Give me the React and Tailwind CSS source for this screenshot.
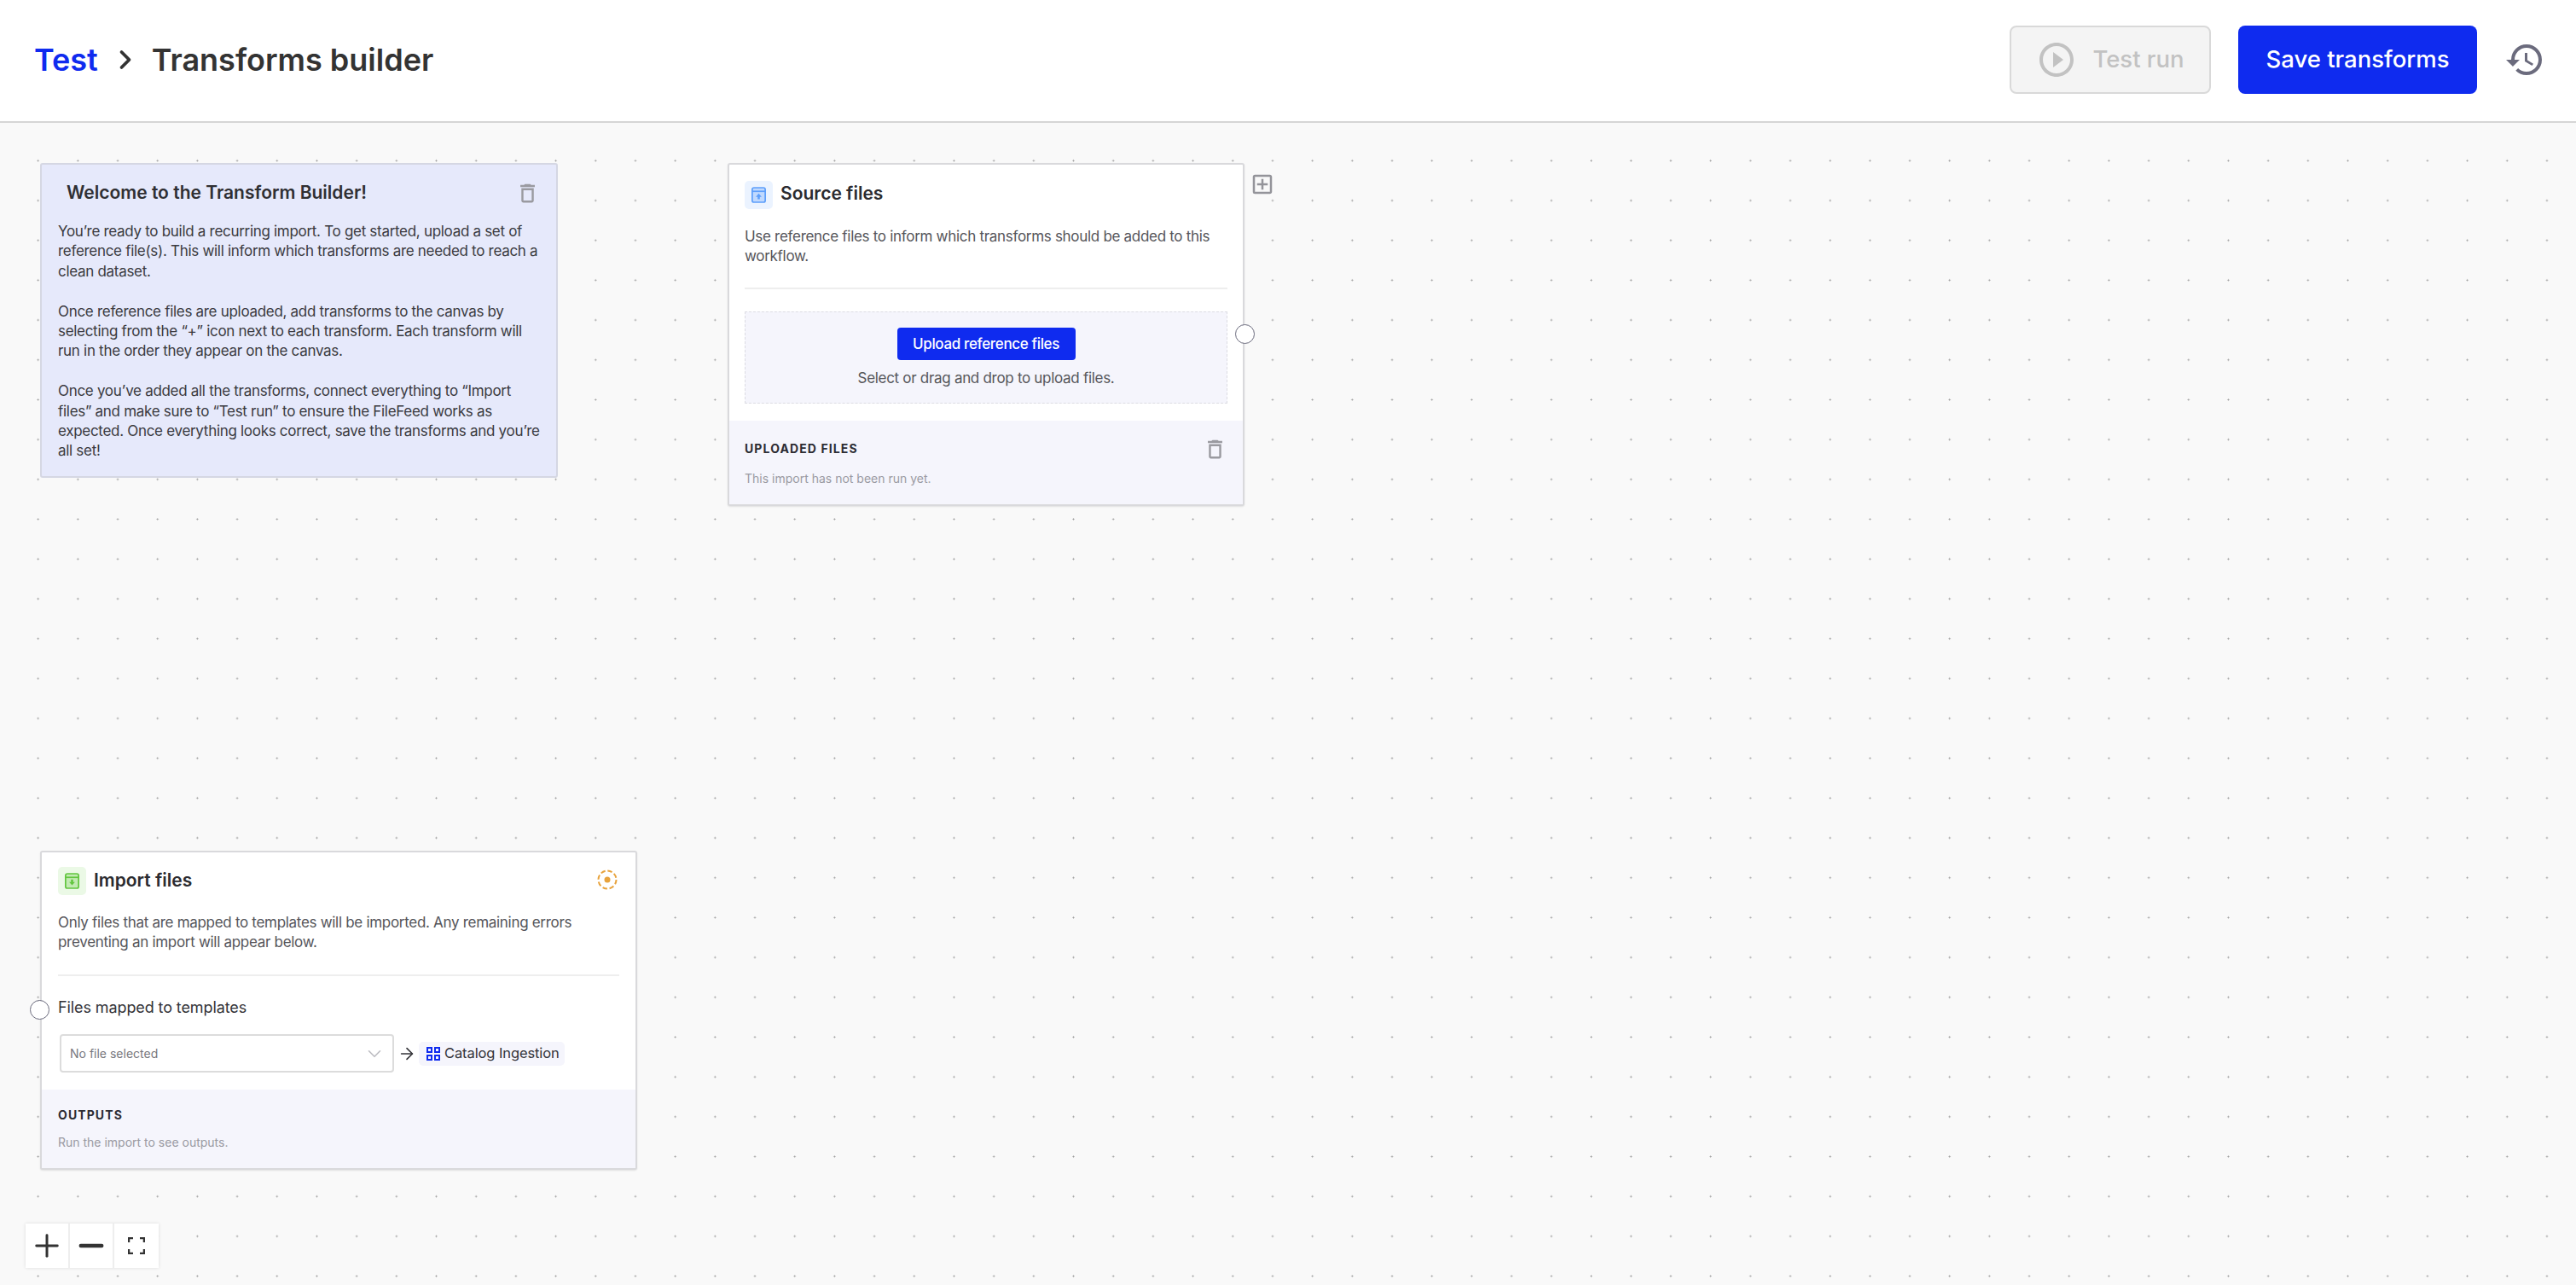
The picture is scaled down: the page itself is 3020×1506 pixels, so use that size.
import React from "react";
import { ChevronRight, ChevronDown, ArrowRight, Plus, Minus } from "lucide-react";
import { MdHistory, MdOutlineDelete, MdOutlineAddBox, MdPlayCircleOutline } from "react-icons/md";

const font = { fontFamily: "Inter, sans-serif" };

const ArchiveIcon = ({ className, down }) => (
  <svg viewBox="0 0 20 22" className={className} fill="none">
    <rect x="1" y="1" width="18" height="20" rx="2.5" fill="currentColor" fillOpacity="0.3" stroke="currentColor" strokeWidth="2" />
    <path d="M1 6h18" stroke="currentColor" strokeWidth="2" />
    {down ? (
      <path d="M8.5 9h3v3.500H14L10 17l-4-4.500h2.500z" fill="currentColor" />
    ) : (
      <path d="M10 9l4 4.500h-2.500V17h-3v-3.500H6z" fill="currentColor" />
    )}
  </svg>
);

export default function App() {
  return (
    <div className="flex flex-col h-[1506px] w-full overflow-hidden text-[#333333]" style={font}>
      <header className="flex items-center justify-between h-[144px] shrink-0 bg-white border-b-2 border-[#d6d6d6] pl-[40px] pr-[36px] pb-[2px]">
        <div className="flex items-center text-[36px] font-semibold leading-[44px]">
          <span className="text-[#0f2bef]">Test</span>
          <ChevronRight className="w-[36px] h-[36px] ml-[14px] mr-[13px] text-[#333333]" strokeWidth={2.5} />
          <span>Transforms builder</span>
        </div>
        <div className="flex items-center">
          <button className="flex items-center justify-center w-[236px] h-[80px] rounded-[8px] border-2 border-[#d9d9d9] bg-[#f4f4f4] text-[27.5px] font-medium text-[#c2c2c2]">
            <MdPlayCircleOutline className="w-[48px] h-[48px] mr-[18px]" />
            Test run
          </button>
          <button className="ml-[32px] w-[280px] h-[80px] rounded-[8px] bg-[#0f2bef] text-white text-[27.5px] font-medium">
            Save transforms
          </button>
          <MdHistory className="ml-[32px] w-[48px] h-[48px] text-[#6b6b7d]" />
        </div>
      </header>

      <main className="relative flex-1 bg-[#f9f9f9] bg-[radial-gradient(circle,#9a9a9a_0.9px,transparent_1.1px)] bg-[size:46.7px_46.7px] bg-[position:21.3px_21px]">
        {/* welcome note */}
        <div className="absolute left-[47px] top-[47px] w-[607px] h-[369px] rounded-[3px] border-2 border-[#d5d7e3] bg-[#e6e9fb] pl-[19px] pr-[19px]">
          <div className="flex items-center justify-between h-[66px] pl-[10px]">
            <div className="text-[21px] font-semibold text-[#2f2f33]">Welcome to the Transform Builder!</div>
            <MdOutlineDelete className="w-[29px] h-[29px] text-[#9a9aa0]" />
          </div>
          <div className="text-[17px] tracking-[-0.3px] leading-[23.4px] text-[#3a3a40] mt-[1px] w-[567px]">
            <p>You’re ready to build a recurring import. To get started, upload a set of reference file(s). This will inform which transforms are needed to reach a clean dataset.</p>
            <p className="mt-[23.4px]">Once reference files are uploaded, add transforms to the canvas by selecting from the “+” icon next to each transform. Each transform will run in the order they appear on the canvas.</p>
            <p className="mt-[23.4px]">Once you’ve added all the transforms, connect everything to “Import files” and make sure to “Test run” to ensure the FileFeed works as expected. Once everything looks correct, save the transforms and you’re all set!</p>
          </div>
        </div>

        {/* source files node */}
        <div className="absolute left-[853px] top-[47px] w-[606px] rounded-[3px] border-2 border-[#d9d9dc] bg-white shadow-[0_1px_2px_rgba(0,0,0,0.1)]">
          <div className="flex items-center gap-[9px] px-[18px] pt-[18px]">
            <div className="flex items-center justify-center w-[33px] h-[33px] rounded-[5px] bg-[#ebf3ff] text-[#5d9ffb]">
              <ArchiveIcon className="w-[17px] h-[19px]" />
            </div>
            <div className="text-[21px] font-semibold text-[#2b2b2f] mb-[3px]">Source files</div>
          </div>
          <div className="mx-[18px] mt-[20px] pb-[25px] border-b-2 border-[#eeeeee] text-[17px] tracking-[-0.3px] leading-[23.4px] text-[#55555a]">
            Use reference files to inform which transforms should be added to this workflow.
          </div>
          <div className="mx-[18px] mt-[26px] h-[108px] flex flex-col items-center border border-dashed border-[#dcdce3] bg-[#f5f5fc] pt-[18px]">
            <button className="w-[209px] h-[38px] rounded-[4px] bg-[#0f2bef] text-white text-[17px] tracking-[-0.35px] font-medium">
              Upload reference files
            </button>
            <div className="mt-[9px] text-[17px] tracking-[-0.3px] leading-[24px] text-[#55555a]">Select or drag and drop to upload files.</div>
          </div>
          <div className="mt-[20px] bg-[#f5f5fc] px-[18px] pt-[22px] pb-[19px]">
            <div className="flex items-center justify-between h-[22px]">
              <div className="text-[14px] font-bold tracking-[1.1px] text-[#2c2c33] leading-[22px]">UPLOADED FILES</div>
              <MdOutlineDelete className="w-[29px] h-[29px] text-[#9a9aa0]" />
            </div>
            <div className="mt-[13px] text-[14px] leading-[22px] text-[#9a9aa2]">This import has not been run yet.</div>
          </div>
          <div className="absolute right-[-14px] top-[187px] w-[23px] h-[23px] rounded-full border border-[#6b6b7d] bg-white" />
        </div>
        <MdOutlineAddBox className="absolute left-[1465px] top-[57px] w-[30px] h-[30px] text-[#94949a]" />

        {/* import files node */}
        <div className="absolute left-[47px] top-[853px] w-[700px] rounded-[3px] border-2 border-[#d9d9dc] bg-white shadow-[0_1px_2px_rgba(0,0,0,0.1)]">
          <div className="flex items-center gap-[9px] px-[19px] pt-[17px]">
            <div className="flex items-center justify-center w-[33px] h-[33px] rounded-[5px] bg-[#ebf9e6] text-[#62c63f]">
              <ArchiveIcon className="w-[17px] h-[19px]" down />
            </div>
            <div className="text-[21px] font-semibold text-[#2b2b2f] mb-[2px]">Import files</div>
            <svg viewBox="0 0 24 24" className="ml-auto mr-[2px] mb-[3px] w-[24px] h-[24px] text-[#e8a33d]" fill="none">
              <circle cx="12" cy="12" r="10.500" stroke="currentColor" strokeWidth="2" strokeDasharray="5.500 2.750" />
              <circle cx="12" cy="12" r="3.500" fill="currentColor" />
            </svg>
          </div>
          <div className="mx-[19px] mt-[20px] pb-[26px] border-b-2 border-[#eeeeee] text-[17px] tracking-[-0.3px] leading-[23.4px] text-[#55555a]">
            Only files that are mapped to templates will be imported. Any remaining errors preventing an import will appear below.
          </div>
          <div className="mx-[19px] mt-[25px] text-[18px] tracking-[-0.1px] leading-[24px] text-[#333338]">Files mapped to templates</div>
          <div className="flex items-center ml-[21px] mt-[19px]">
            <div className="flex items-center justify-between w-[392px] h-[45px] rounded-[4px] border-2 border-[#dcdcdc] bg-white pl-[10px] pr-[8px] text-[14px] text-[#77777d]">
              No file selected
              <ChevronDown className="w-[26px] h-[26px] text-[#bdbdc2]" strokeWidth={1.5} />
            </div>
            <ArrowRight className="ml-[4px] w-[22px] h-[22px] text-[#333338]" strokeWidth={1.75} />
            <div className="flex items-center ml-[3px] h-[28px] w-[171px] rounded-[5px] bg-[#f5f5fc] pl-[9px] text-[16.5px] tracking-[-0.1px] text-[#333338] whitespace-nowrap">
              <svg viewBox="0 0 16 16" className="w-[16px] h-[16px] mr-[5px] text-[#0f2bef]" fill="none" stroke="currentColor" strokeWidth="2">
                <rect x="1" y="1" width="5" height="5" />
                <rect x="10" y="1" width="5" height="5" />
                <rect x="1" y="10" width="5" height="5" />
                <rect x="10" y="10" width="5" height="5" />
              </svg>
              Catalog Ingestion
            </div>
          </div>
          <div className="mt-[20px] bg-[#f5f5fc] px-[19px] pt-[19px] pb-[19px]">
            <div className="text-[14px] font-bold tracking-[1.1px] text-[#2c2c33] leading-[22px]">OUTPUTS</div>
            <div className="mt-[10px] text-[14px] leading-[22px] text-[#9a9aa2]">Run the import to see outputs.</div>
          </div>
          <div className="absolute left-[-14px] top-[173px] w-[23px] h-[23px] rounded-full border border-[#6b6b7d] bg-white" />
        </div>

        {/* zoom controls */}
        <div className="absolute left-[30px] bottom-[20px] flex h-[52px] bg-white shadow-[0_0_4px_rgba(0,0,0,0.12)] divide-x-2 divide-[#eeeeee] text-[#333333]">
          <div className="flex items-center justify-center w-[52px]"><Plus className="w-[42px] h-[42px]" strokeWidth={1.7} /></div>
          <div className="flex items-center justify-center w-[52px]"><Minus className="w-[42px] h-[42px]" strokeWidth={2.5} /></div>
          <div className="flex items-center justify-center w-[52px]">
            <svg viewBox="0 0 20 20" className="w-[20px] h-[20px]" fill="none" stroke="currentColor" strokeWidth="2.5">
              <path d="M1 6V1h5M14 1h5v5M19 14v5h-5M6 19H1v-5" />
            </svg>
          </div>
        </div>
      </main>
    </div>
  );
}
